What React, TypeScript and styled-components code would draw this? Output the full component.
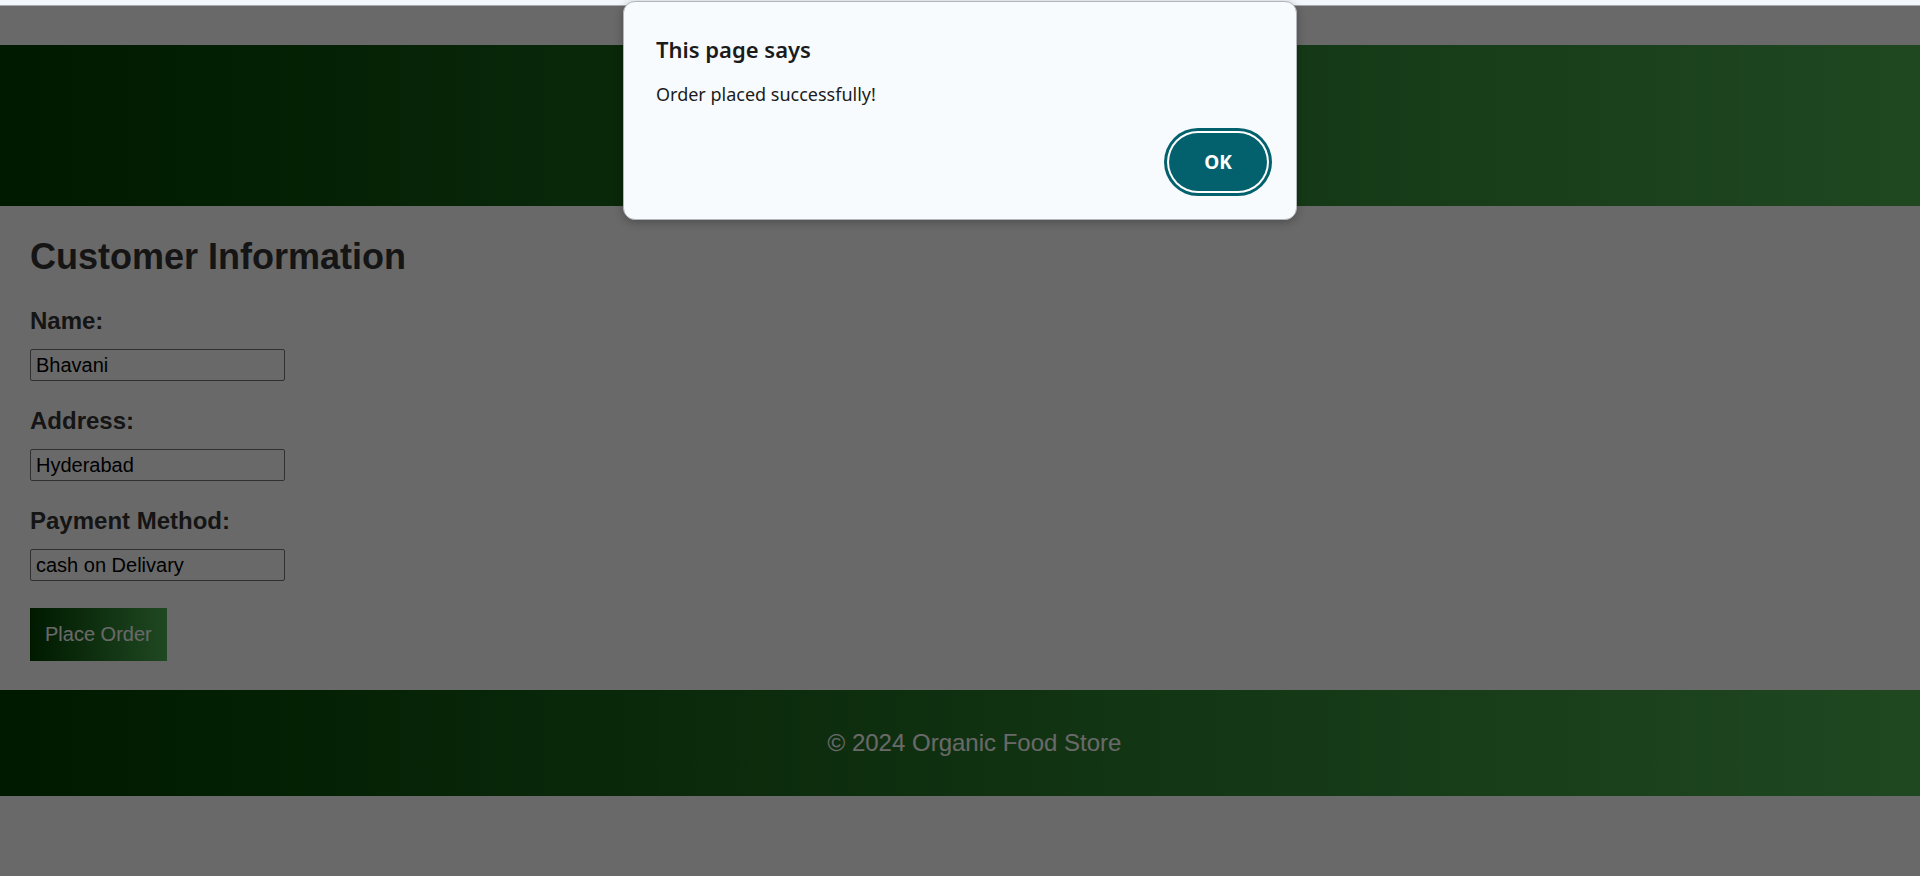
import React from "react";
import styled, { createGlobalStyle } from "styled-components";

const Global = createGlobalStyle`
  html, body {
    margin: 0;
    padding: 0;
    background: #ffffff;
  }
  body {
    font-family: "Liberation Sans", Arial, sans-serif;
    overflow: hidden;
  }
`;

const Screen = styled.div`
  position: relative;
  width: 1920px;
  height: 876px;
  overflow: hidden;
  display: flex;
  flex-direction: column;
`;

const BrowserEdge = styled.div`
  height: 5px;
  background: #f3f8fc;
  border-bottom: 1px solid #a7abaf;
  flex: none;
`;

const Page = styled.div`
  position: relative;
  flex: 1;
  display: flex;
  flex-direction: column;
  background: #ffffff;
`;

const brandGradient = "linear-gradient(to right, #003f00, #4caf50)";

const Header = styled.header`
  margin-top: 39px;
  height: 161px;
  background: ${brandGradient};
`;

const Main = styled.main`
  padding: 30px 30px 29px;
  display: flex;
  flex-direction: column;
  align-items: flex-start;
`;

const Title = styled.h2`
  margin: 0 0 30px;
  font-size: 36px;
  line-height: 41px;
  font-weight: 700;
  color: #333333;
`;

const Form = styled.form`
  display: flex;
  flex-direction: column;
  align-items: flex-start;
  gap: 26px;
`;

const Field = styled.div`
  display: flex;
  flex-direction: column;
  align-items: flex-start;
  gap: 14px;
`;

const Label = styled.label`
  font-size: 24px;
  line-height: 28px;
  font-weight: 700;
  color: #333333;
`;

const Input = styled.input`
  box-sizing: border-box;
  width: 255px;
  height: 32px;
  margin: 0;
  padding: 0 5px;
  border: 1px solid #767676;
  border-radius: 2px;
  background: #ffffff;
  font-family: "Liberation Sans", Arial, sans-serif;
  font-size: 20px;
  color: #000000;
  outline: none;
`;

const SubmitButton = styled.button`
  margin-top: 1px;
  padding: 15px;
  border: none;
  background: ${brandGradient};
  color: #ffffff;
  font-family: "Liberation Sans", Arial, sans-serif;
  font-size: 20px;
  line-height: 23px;
  cursor: pointer;
`;

const Footer = styled.footer`
  background: ${brandGradient};
  padding: 39px 0 39px 29px;
  text-align: center;
`;

const FooterText = styled.p`
  margin: 0;
  font-size: 24px;
  line-height: 28px;
  color: #ffffff;
`;

const Scrim = styled.div`
  position: absolute;
  inset: 0;
  background: rgba(0, 0, 0, 0.59);
`;

const Dialog = styled.div`
  position: absolute;
  top: 1px;
  left: calc(50% - 337px);
  width: 674px;
  height: 219px;
  box-sizing: border-box;
  padding: 32px 29px 28px 32px;
  background: #f7fbfe;
  border: 1px solid #b3b7bb;
  border-radius: 12px;
  box-shadow: 0 2px 10px rgba(0, 0, 0, 0.28);
  display: flex;
  flex-direction: column;
  font-family: "Noto Sans", "Open Sans", sans-serif;
  color: #1b1b1b;
`;

const DialogTitle = styled.div`
  font-size: 22px;
  line-height: 30px;
  font-weight: 600;
`;

const DialogMessage = styled.div`
  margin-top: 18px;
  font-size: 18px;
  line-height: 24px;
`;

const DialogActions = styled.div`
  margin-top: auto;
  display: flex;
  justify-content: flex-end;
`;

const OkButton = styled.button`
  width: 98px;
  height: 58px;
  border: none;
  border-radius: 29px;
  background: #03616d;
  box-shadow: 0 0 0 2px #ffffff, 0 0 0 5px #03616d;
  color: #ffffff;
  font-family: "Noto Sans", "Open Sans", sans-serif;
  font-size: 19px;
  font-weight: 700;
  cursor: pointer;
`;

export default function App() {
  return (
    <>
      <Global />
      <Screen>
        <BrowserEdge />
        <Page>
          <Header />
          <Main>
            <Title>Customer Information</Title>
            <Form onSubmit={(e) => e.preventDefault()}>
              <Field>
                <Label htmlFor="name">Name:</Label>
                <Input id="name" defaultValue="Bhavani" />
              </Field>
              <Field>
                <Label htmlFor="address">Address:</Label>
                <Input id="address" defaultValue="Hyderabad" />
              </Field>
              <Field>
                <Label htmlFor="payment">Payment Method:</Label>
                <Input id="payment" defaultValue="cash on Delivary" />
              </Field>
              <SubmitButton type="submit">Place Order</SubmitButton>
            </Form>
          </Main>
          <Footer>
            <FooterText>© 2024 Organic Food Store</FooterText>
          </Footer>
          <Scrim />
        </Page>
        <Dialog role="alertdialog">
          <DialogTitle>This page says</DialogTitle>
          <DialogMessage>Order placed successfully!</DialogMessage>
          <DialogActions>
            <OkButton>OK</OkButton>
          </DialogActions>
        </Dialog>
      </Screen>
    </>
  );
}
